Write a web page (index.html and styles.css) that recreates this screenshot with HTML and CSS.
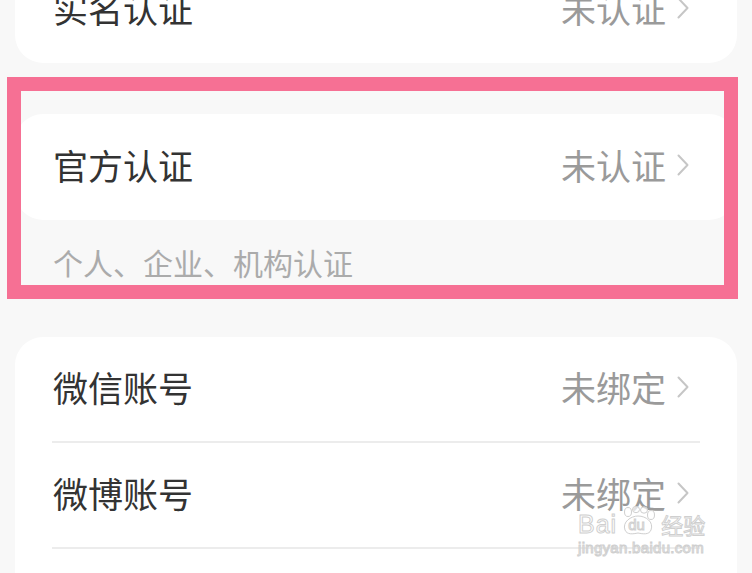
FILE: index.html
```html
<!DOCTYPE html>
<html lang="zh-CN">
<head>
  <meta charset="UTF-8" />
  <meta name="viewport" content="width=device-width, initial-scale=1.0"/>
  <title>账号与安全</title>
  <link rel="stylesheet" href="styles.css">
</head>
<body>

  <div class="page">

    <!-- 实名认证 -->
    <div class="card">
      <div class="row">
        <span class="label">实名认证</span>
        <span class="value">未认证<svg class="chev" viewBox="0 0 12 22"><polyline points="1.5,1.5 10.5,11 1.5,20.5" /></svg></span>
      </div>
    </div>

    <!-- 官方认证 (highlighted) -->
    <div class="group">
      <div class="card">
        <div class="row">
          <span class="label">官方认证</span>
          <span class="value">未认证<svg class="chev" viewBox="0 0 12 22"><polyline points="1.5,1.5 10.5,11 1.5,20.5" /></svg></span>
        </div>
      </div>
      <p class="hint">个人、企业、机构认证</p>
      <div class="highlight"></div>
    </div>

    <!-- 绑定账号 -->
    <div class="card">
      <div class="row line">
        <span class="label">微信账号</span>
        <span class="value">未绑定<svg class="chev" viewBox="0 0 12 22"><polyline points="1.5,1.5 10.5,11 1.5,20.5" /></svg></span>
      </div>
      <div class="row line">
        <span class="label">微博账号</span>
        <span class="value">未绑定<svg class="chev" viewBox="0 0 12 22"><polyline points="1.5,1.5 10.5,11 1.5,20.5" /></svg></span>
      </div>
      <div class="row">
        <span class="label">QQ账号</span>
        <span class="value">未绑定<svg class="chev" viewBox="0 0 12 22"><polyline points="1.5,1.5 10.5,11 1.5,20.5" /></svg></span>
      </div>
    </div>

    <!-- watermark -->
    <div class="watermark">
      <div class="wm-top">
        <span class="wm-bai">Bai</span>
        <span class="wm-paw">
          <svg width="38" height="30" viewBox="0 0 38 30">
            <ellipse cx="9" cy="6" rx="3.5" ry="4.5" />
            <ellipse cx="17" cy="3.5" rx="3.5" ry="3.2" />
            <ellipse cx="25" cy="4" rx="3.5" ry="3.2" />
            <ellipse cx="32" cy="9" rx="3.5" ry="4.5" />
            <path d="M6 24 C3 16 12 10 19 10 C27 10 35 16 32 24 C30 29 24 28 19 27 C14 28 8 29 6 24 Z" />
          </svg>
          <span class="wm-du">du</span>
        </span>
        <span class="wm-cn">经验</span>
      </div>
      <div class="wm-url">jingyan.baidu.com</div>
    </div>

  </div>

</body>
</html>
```

FILE: styles.css
```css
body {
  margin: 0;
  background: #f8f8f8;
  font-family: "Noto Sans CJK SC", "Noto Sans", sans-serif;
  overflow: hidden;
}

.page {
  position: relative;
  margin-top: -43px;
  padding: 0 15px;
}

.card {
  background: #fff;
  border-radius: 28px;
}

.row {
  position: relative;
  box-sizing: border-box;
  height: 106px;
  padding: 0 48px 6px 38px;
  display: flex;
  align-items: center;
  justify-content: space-between;
}

.row.line {
  height: 104px;
}

.row.line + .row {
  margin-top: 2px;
}

.row.line::after {
  content: "";
  position: absolute;
  left: 37px;
  right: 37px;
  bottom: -2px;
  height: 2px;
  background: #ececec;
}

.label {
  font-size: 35px;
  color: #333;
}

.value {
  font-size: 35px;
  color: #9a9a9a;
  display: flex;
  align-items: center;
}

.chev {
  width: 12px;
  height: 22px;
  margin-left: 11px;
  margin-top: 2px;
  fill: none;
  stroke: #c6c6c6;
  stroke-width: 2;
  stroke-linecap: round;
  stroke-linejoin: round;
}

.group {
  position: relative;
  margin-top: 51px;
}

.hint {
  margin: 22px 0 55px;
  padding-left: 38px;
  font-size: 30px;
  line-height: 40px;
  color: #ababab;
}

.highlight {
  position: absolute;
  top: -37px;
  left: -8px;
  width: 703px;
  height: 194px;
  border: 14px solid #f67094;
}

.watermark {
  position: absolute;
  left: 578px;
  top: 549px;
  color: rgba(255, 255, 255, 0.7);
  -webkit-text-stroke: 1px #cfcfcf;
  font-family: "Liberation Sans", Arial, sans-serif;
}

.wm-top {
  display: flex;
  align-items: flex-end;
  height: 30px;
}

.wm-bai {
  font-size: 25px;
  line-height: 24px;
  letter-spacing: 1px;
}

.wm-paw {
  position: relative;
  width: 38px;
  height: 30px;
  margin-left: 2px;
}

.wm-paw svg {
  fill: rgba(255, 255, 255, 0.7);
  stroke: #cfcfcf;
  stroke-width: 1;
}

.wm-du {
  position: absolute;
  left: 9px;
  top: 11px;
  font-size: 15px;
  line-height: 15px;
}

.wm-cn {
  font-family: "Noto Sans CJK SC", sans-serif;
  font-size: 22px;
  line-height: 24px;
  margin-left: 4px;
}

.wm-url {
  font-size: 15px;
  line-height: 20px;
  margin-top: 2px;
  letter-spacing: 0.3px;
}
```
